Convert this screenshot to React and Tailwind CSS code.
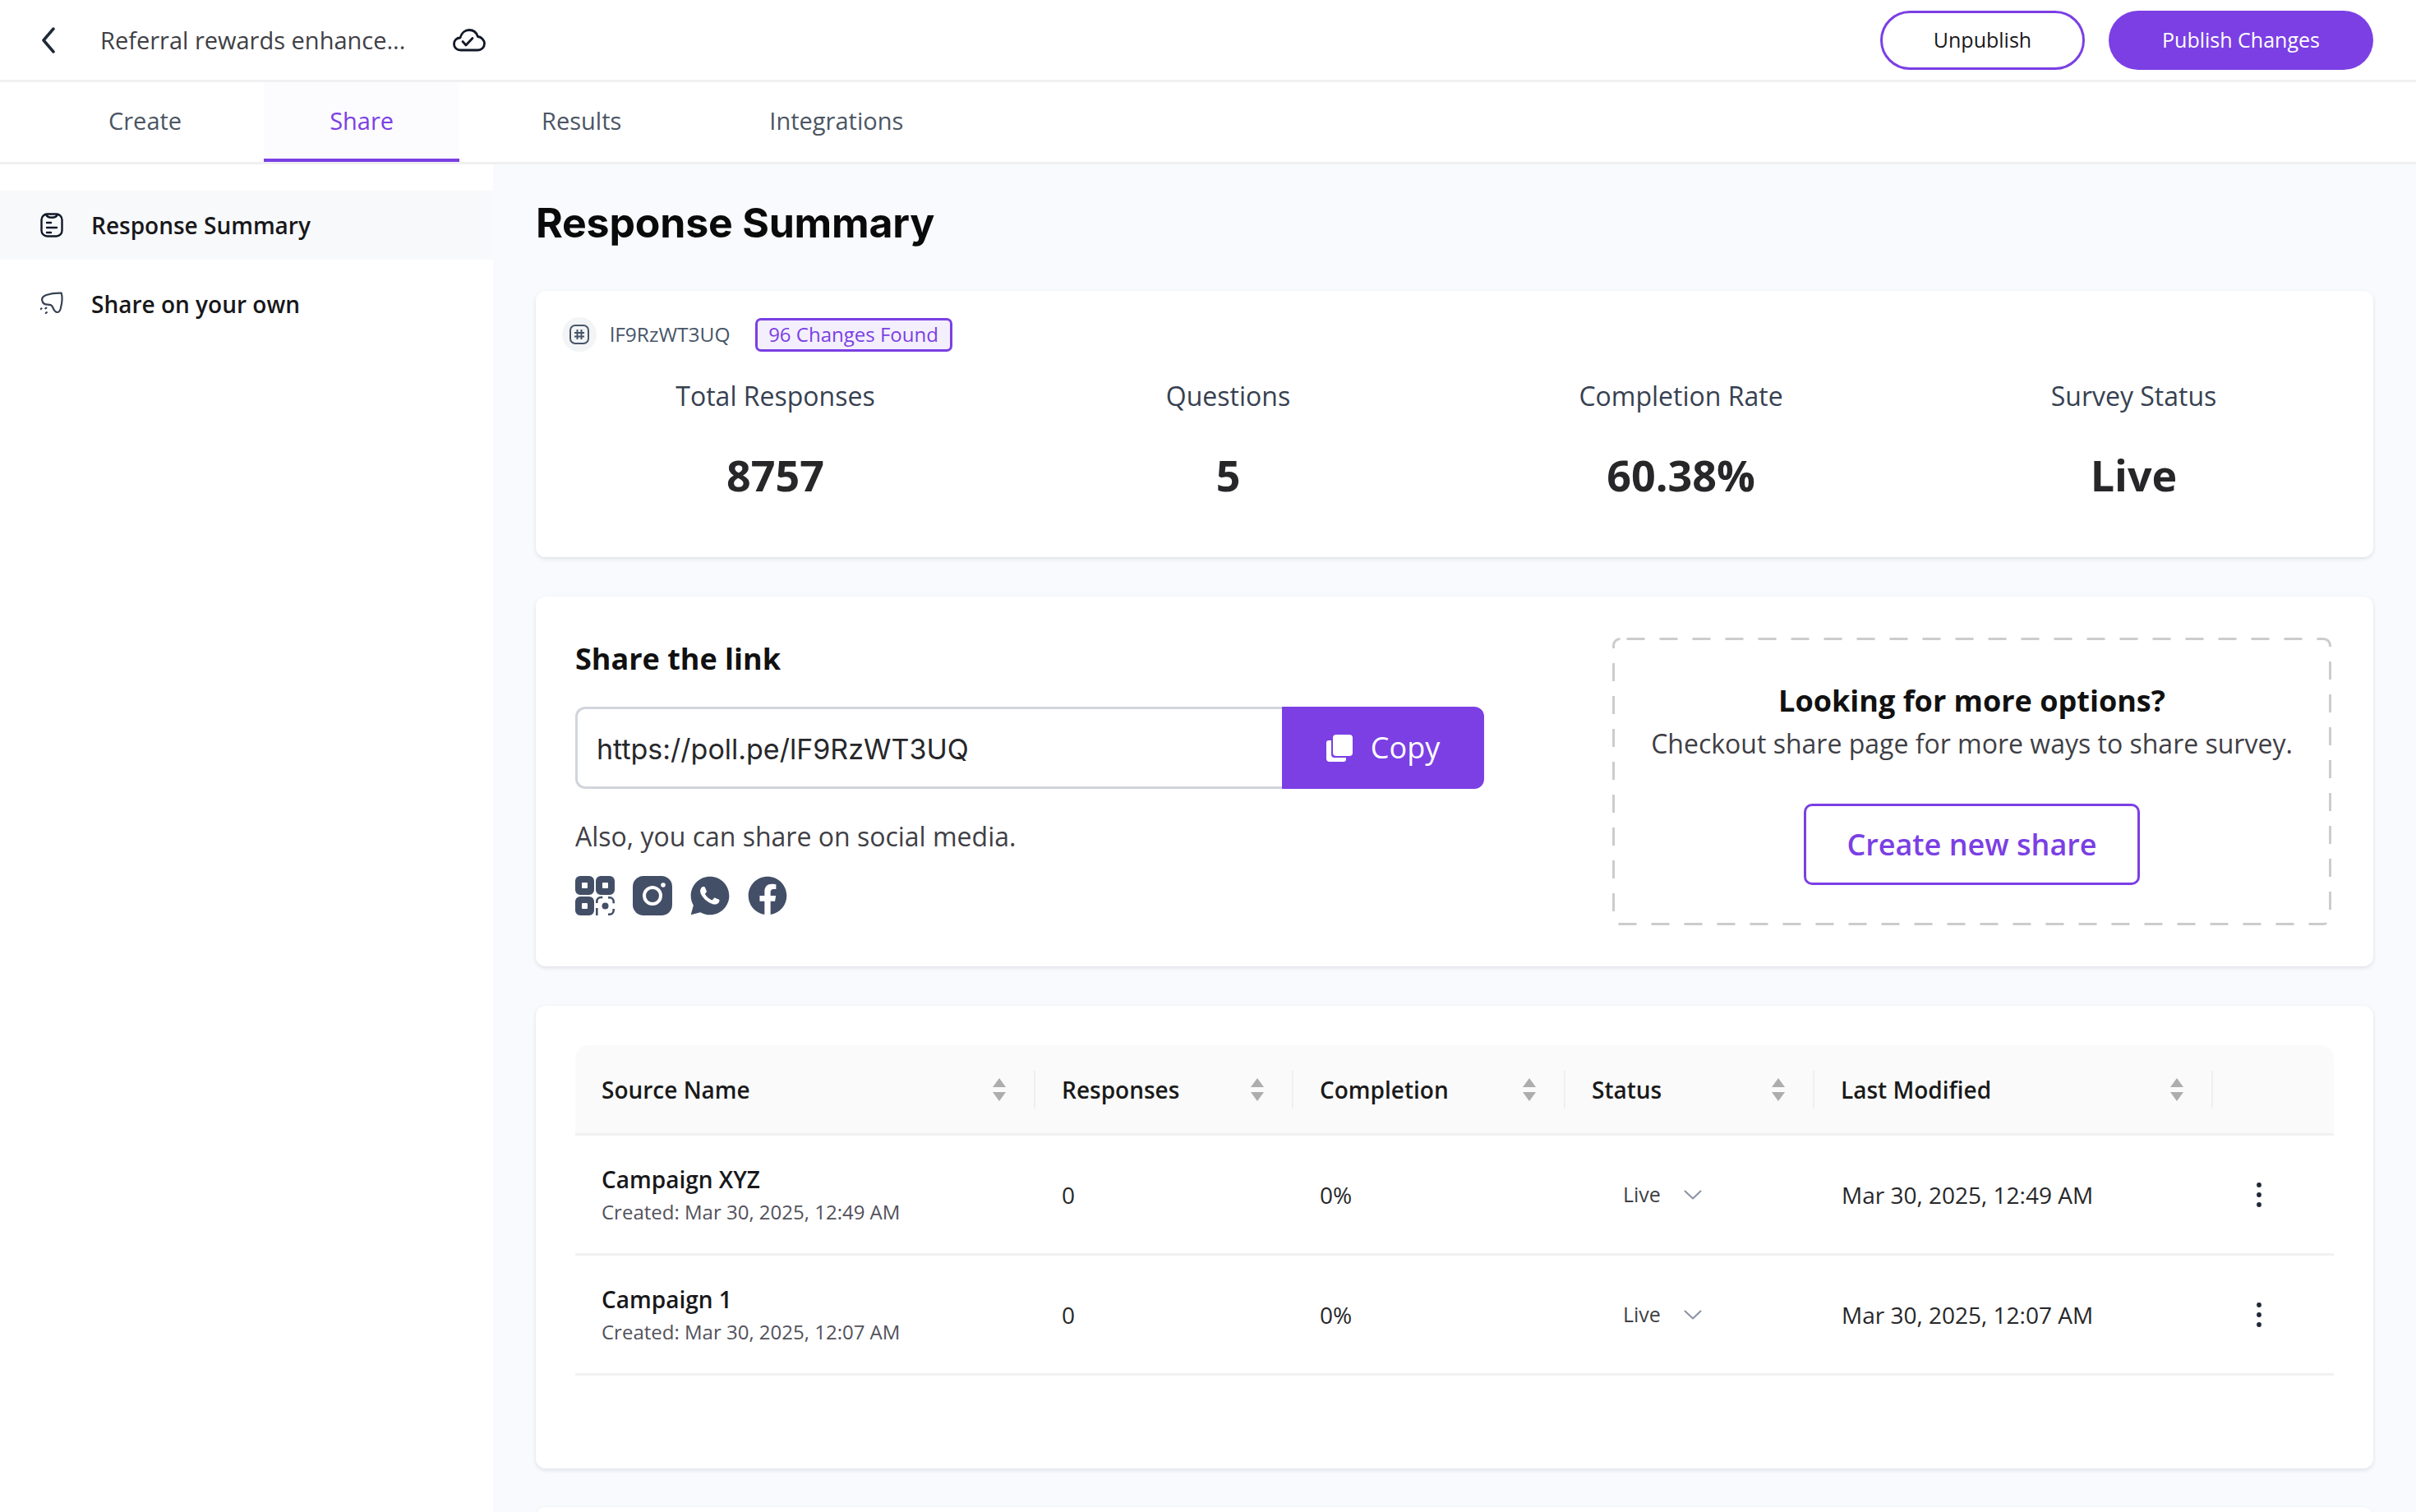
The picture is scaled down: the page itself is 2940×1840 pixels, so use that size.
import React from "react";
import { RiWhatsappFill, RiFacebookCircleFill } from "react-icons/ri";

function Chevron() {
  return (
    <svg width="18" height="32" viewBox="0 0 18 32" fill="none" stroke="#1f2937" strokeWidth="3.5" strokeLinecap="round" strokeLinejoin="round">
      <path d="M15 2 L3 16 L15 30" />
    </svg>
  );
}
function Cloud() {
  return (
    <svg width="40" height="28" viewBox="0 0 40 28" fill="none" stroke="#111827" strokeWidth="2.8" strokeLinejoin="round" strokeLinecap="round">
      <path d="M9.5 26 C4.5 26 1.5 22.5 1.5 18.5 C1.5 14 5 11 9 11 C10.5 5 15 1.5 20 1.5 C25.5 1.5 29 5 30.5 9.5 C35 10 38.5 14 38.5 18 C38.5 22.5 35 26 30 26 Z" />
      <path d="M12 15.5 L16 20 L24 11.5" />
    </svg>
  );
}
function Clipboard() {
  return (
    <svg width="28" height="30" viewBox="0 0 28 30" fill="none" stroke="#111827" strokeWidth="2.4" strokeLinecap="round" strokeLinejoin="round">
      <rect x="1.5" y="1.5" width="25" height="27" rx="7" />
      <path d="M7 2 C9 7 19 7 21 2" />
      <path d="M8 12 H13 M8 18 H20 M8 24 H13" />
    </svg>
  );
}
function Megaphone() {
  return (
    <svg width="28" height="30" viewBox="0 0 28 30" fill="none" stroke="#374151" strokeWidth="2.2" strokeLinecap="round" strokeLinejoin="round">
      <path d="M25.7 1.7 C20 1.5 12 2.5 7.3 4 C3.5 5.5 1.5 8 2.3 10.7 C3 14 5.5 15.7 9 15.7 C12 15.7 14 16.3 15 18.5 C16 21 17.5 25 20.7 25 C23 25 24 23 24.7 20.7 C26 16 27.5 8 25.7 1.7 Z" />
      <path d="M0.5 21 L1.5 20.3 M6.3 20.4 L7.3 19.6 M6.8 26 L7.8 25.2" />
    </svg>
  );
}
function Hash() {
  return (
    <svg width="24" height="24" viewBox="0 0 24 24" fill="none" stroke="#475569" strokeWidth="2">
      <rect x="1" y="1" width="22" height="22" rx="6" />
      <path d="M9.5 6 V18 M14.5 6 V18 M6 10 H18 M6 14.5 H18" />
    </svg>
  );
}
function QrIcon() {
  return (
    <svg width="48" height="48" viewBox="0 0 48 48" fill="#434f67">
      <path fillRule="evenodd" d="M6 0h11a6 6 0 0 1 6 6v11a6 6 0 0 1-6 6H6a6 6 0 0 1-6-6V6a6 6 0 0 1 6-6Zm3 8a1 1 0 0 0-1 1v5a1 1 0 0 0 1 1h5a1 1 0 0 0 1-1V9a1 1 0 0 0-1-1Z" />
      <path fillRule="evenodd" d="M31 0h11a6 6 0 0 1 6 6v11a6 6 0 0 1-6 6H31a6 6 0 0 1-6-6V6a6 6 0 0 1 6-6Zm3 8a1 1 0 0 0-1 1v5a1 1 0 0 0 1 1h5a1 1 0 0 0 1-1V9a1 1 0 0 0-1-1Z" />
      <path fillRule="evenodd" d="M6 25h11a6 6 0 0 1 6 6v11a6 6 0 0 1-6 6H6a6 6 0 0 1-6-6V31a6 6 0 0 1 6-6Zm3 8a1 1 0 0 0-1 1v5a1 1 0 0 0 1 1h5a1 1 0 0 0 1-1v-5a1 1 0 0 0-1-1Z" />
      <circle cx="36.5" cy="36.5" r="4" />
      <path d="M26.3 33v-2a5 5 0 0 1 5-5h2M40 26.3h2a5 5 0 0 1 4.7 5v2M46.7 40v2a5 5 0 0 1-4.7 4.7h-2M26.3 39v9" fill="none" stroke="#434f67" strokeWidth="2.6" />
    </svg>
  );
}
function Insta() {
  return (
    <svg width="48" height="48" viewBox="0 0 48 48">
      <rect width="48" height="48" rx="13" fill="#434f67" />
      <circle cx="24" cy="24" r="10" fill="none" stroke="#fff" strokeWidth="4" />
      <circle cx="37" cy="11" r="2.8" fill="#fff" />
    </svg>
  );
}
function CopyIcon() {
  return (
    <svg width="32" height="33" viewBox="0 0 32 33" fill="#fff">
      <rect x="8" y="0" width="24" height="26" rx="4" />
      <path d="M6 7 V24 a4 4 0 0 0 4 4 H24 V30 a3 3 0 0 1-3 3 H4 a4 4 0 0 1-4-4 V10 a3 3 0 0 1 3-3 Z" />
    </svg>
  );
}
function Sort() {
  return (
    <svg width="18" height="28" viewBox="0 0 18 28" fill="#adadad" className="shrink-0">
      <path d="M9 0 L17 11 H1 Z M1 17 H17 L9 28 Z" />
    </svg>
  );
}
function Down() {
  return (
    <svg width="22" height="12" viewBox="0 0 22 12" fill="none" stroke="#8a93a3" strokeWidth="2" strokeLinecap="round" strokeLinejoin="round">
      <path d="M1.5 1.5 L11 10.5 L20.5 1.5" />
    </svg>
  );
}
function Kebab() {
  return (
    <svg width="6" height="30" viewBox="0 0 6 30" fill="#1f2937">
      <circle cx="3" cy="3" r="2.9" /><circle cx="3" cy="15" r="2.9" /><circle cx="3" cy="27" r="2.9" />
    </svg>
  );
}

const GRID = "grid grid-cols-[560px_314px_331px_303px_485px_147px]";

function Head({ label }) {
  return (
    <div className="relative flex items-center justify-between pl-[32px] pr-[35px] h-full">
      <span className="text-[28px] font-semibold text-[#1a1a1a]">{label}</span>
      <Sort />
      <span className="absolute right-0 top-[31px] h-[46px] w-[2px] bg-[#efefef]" />
    </div>
  );
}

function Row({ name, created, date }) {
  return (
    <div className={`${GRID} h-[146px] items-center border-b-[3px] border-[#f1f1f3] text-[28px] text-[#27272a]`}>
      <div className="pl-[32px] pt-[3px]">
        <div className="text-[28px] leading-[40px] font-semibold text-[#18181b]">{name}</div>
        <div className="text-[24px] leading-[40px] text-[#52525b]">Created: {created}</div>
      </div>
      <div className="pl-[32px]">0</div>
      <div className="pl-[32px]">0%</div>
      <div className="pl-[70px] flex items-center gap-[28px] text-[25px] text-[#3f3f46]">
        <span>Live</span>
        <Down />
      </div>
      <div className="pl-[33px]">{date}</div>
      <div className="flex pl-[53px]"><Kebab /></div>
    </div>
  );
}

function Stat({ label, value }) {
  return (
    <div className="flex flex-col items-center">
      <div className="text-[32px] leading-[44px] text-[#374151]">{label}</div>
      <div className="mt-[38px] text-[52px] leading-[72px] font-bold text-[#27272a]">{value}</div>
    </div>
  );
}

function Tab({ label, active }) {
  return (
    <div className={`flex items-center px-[80px] h-full text-[29px] font-medium ${active ? "border-b-[4px] border-[#7b3fe4] bg-[#fcfcff] text-[#7b3fe4]" : "pb-[4px] text-[#4b5563]"}`}>
      {label}
    </div>
  );
}

export default function App() {
  return (
    <div className="w-[2940px] h-[1840px] overflow-hidden bg-white flex flex-col font-['Open_Sans',sans-serif]">
      <header className="h-[100px] shrink-0 border-b-[3px] border-[#f0f0f0] flex items-center pl-[50px] pr-[52px]">
        <Chevron />
        <span className="ml-[54px] text-[29px] font-medium text-[#3f3f46]">Referral rewards enhance...</span>
        <span className="ml-[58px] flex"><Cloud /></span>
        <div className="ml-auto flex gap-[29px]">
          <button className="w-[249px] h-[72px] rounded-full border-[3px] border-[#7b3fe4] text-[25px] font-medium text-[#18181b]">Unpublish</button>
          <button className="w-[322px] h-[72px] rounded-full bg-[#7b3fe4] text-[25px] font-medium text-white">Publish Changes</button>
        </div>
      </header>
      <nav className="h-[100px] shrink-0 border-b-[3px] border-[#f0f0f0] flex pl-[52px] gap-[20px]">
        <Tab label="Create" />
        <Tab label="Share" active />
        <Tab label="Results" />
        <Tab label="Integrations" />
      </nav>
      <div className="flex-1 flex min-h-0">
        <aside className="w-[600px] shrink-0 pt-[32px] flex flex-col gap-[12px] bg-white">
          <div className="h-[84px] flex items-center gap-[34px] pl-[49px] bg-[#f8f9fb] text-[28px] font-semibold text-[#18181b]">
            <Clipboard /> Response Summary
          </div>
          <div className="h-[84px] flex items-center gap-[34px] pl-[49px] text-[28px] font-semibold text-[#18181b]">
            <Megaphone /> Share on your own
          </div>
        </aside>
        <main className="flex-1 bg-[#f9fafd] pl-[52px] pr-[52px] pt-[37px] overflow-hidden">
          <h1 className="h-[68px] flex items-center text-[50px] font-bold text-[#0a0a0a] font-['Inter',sans-serif] tracking-[-0.2px]">Response Summary</h1>
          <section className="mt-[49px] h-[324px] rounded-[12px] bg-white shadow-[0_2px_5px_rgba(30,41,80,0.12)] px-[16px] pt-[32px]">
            <div className="flex items-center pl-[16px]">
              <span className="w-[42px] h-[42px] rounded-full bg-[#f3f4f6] flex items-center justify-center"><Hash /></span>
              <span className="ml-[16px] text-[24.5px] text-[#475569]">lF9RzWT3UQ</span>
              <span className="ml-[30px] h-[41px] w-[240px] rounded-[7px] border-[3px] border-[#7b3fe4] bg-[#f4effd] text-[#7b3fe4] text-[24px] flex items-center justify-center">96 Changes Found</span>
            </div>
            <div className="grid grid-cols-4 mt-[32px]">
              <Stat label="Total Responses" value="8757" />
              <Stat label="Questions" value="5" />
              <Stat label="Completion Rate" value="60.38%" />
              <Stat label="Survey Status" value="Live" />
            </div>
          </section>
          <section className="mt-[48px] h-[450px] rounded-[12px] bg-white shadow-[0_2px_5px_rgba(30,41,80,0.12)] relative flex justify-between pl-[48px] pr-[51px] pt-[50px]">
            <div>
              <div className="text-[36px] leading-[52px] font-bold text-[#111111]">Share the link</div>
              <div className="mt-[32px] flex h-[100px] w-[1106px]">
                <div className="flex-1 rounded-l-[12px] border-[3px] border-r-0 border-[#d1d5db] flex items-center pl-[23px] pt-[2px] text-[34px] text-[#27272a] font-['Inter',sans-serif]">https://poll.pe/lF9RzWT3UQ</div>
                <div className="w-[246px] rounded-r-[12px] bg-[#7b3fe4] text-white flex items-center justify-center gap-[22px] text-[36px] font-medium"><CopyIcon /> Copy</div>
              </div>
              <div className="mt-[36px] text-[32px] leading-[44px] text-[#3f3f46]">Also, you can share on social media.</div>
              <div className="mt-[26px] flex gap-[22px]">
                <QrIcon />
                <Insta />
                <RiWhatsappFill size={56} color="#434f67" className="-m-[4px]" />
                <RiFacebookCircleFill size={56} color="#434f67" className="-m-[4px]" />
              </div>
            </div>
            <div className="relative w-[875px] h-[350px] flex flex-col items-center pt-[52px]">
              <svg className="absolute inset-0 w-full h-full" fill="none">
                <rect x="1.5" y="1.5" width="872" height="347" rx="8" stroke="#cccccc" strokeWidth="3" strokeDasharray="22 18" strokeDashoffset="-8" />
              </svg>
              <div className="text-[36px] leading-[50px] font-bold text-[#111111]">Looking for more options?</div>
              <div className="mt-[2px] text-[32px] leading-[50px] text-[#3f3f46]">Checkout share page for more ways to share survey.</div>
              <div className="mt-[48px] w-[409px] h-[99px] rounded-[10px] border-[3px] border-[#7b3fe4] flex items-center justify-center text-[36px] font-semibold text-[#7b3fe4]">Create new share</div>
            </div>
          </section>
          <section className="mt-[48px] h-[563px] rounded-[12px] bg-white shadow-[0_2px_5px_rgba(30,41,80,0.12)] px-[48px] pt-[48px]">
            <div className={`${GRID} h-[110px] rounded-t-[16px] bg-[#fafafa] border-b-[3px] border-[#f1f1f3]`}>
              <Head label="Source Name" />
              <Head label="Responses" />
              <Head label="Completion" />
              <Head label="Status" />
              <Head label="Last Modified" />
              <div />
            </div>
            <Row name="Campaign XYZ" created="Mar 30, 2025, 12:49 AM" date="Mar 30, 2025, 12:49 AM" />
            <Row name="Campaign 1" created="Mar 30, 2025, 12:07 AM" date="Mar 30, 2025, 12:07 AM" />
          </section>
          <section className="mt-[47px] h-[200px] rounded-[12px] bg-white shadow-[0_2px_5px_rgba(30,41,80,0.12)]" />
        </main>
      </div>
    </div>
  );
}
